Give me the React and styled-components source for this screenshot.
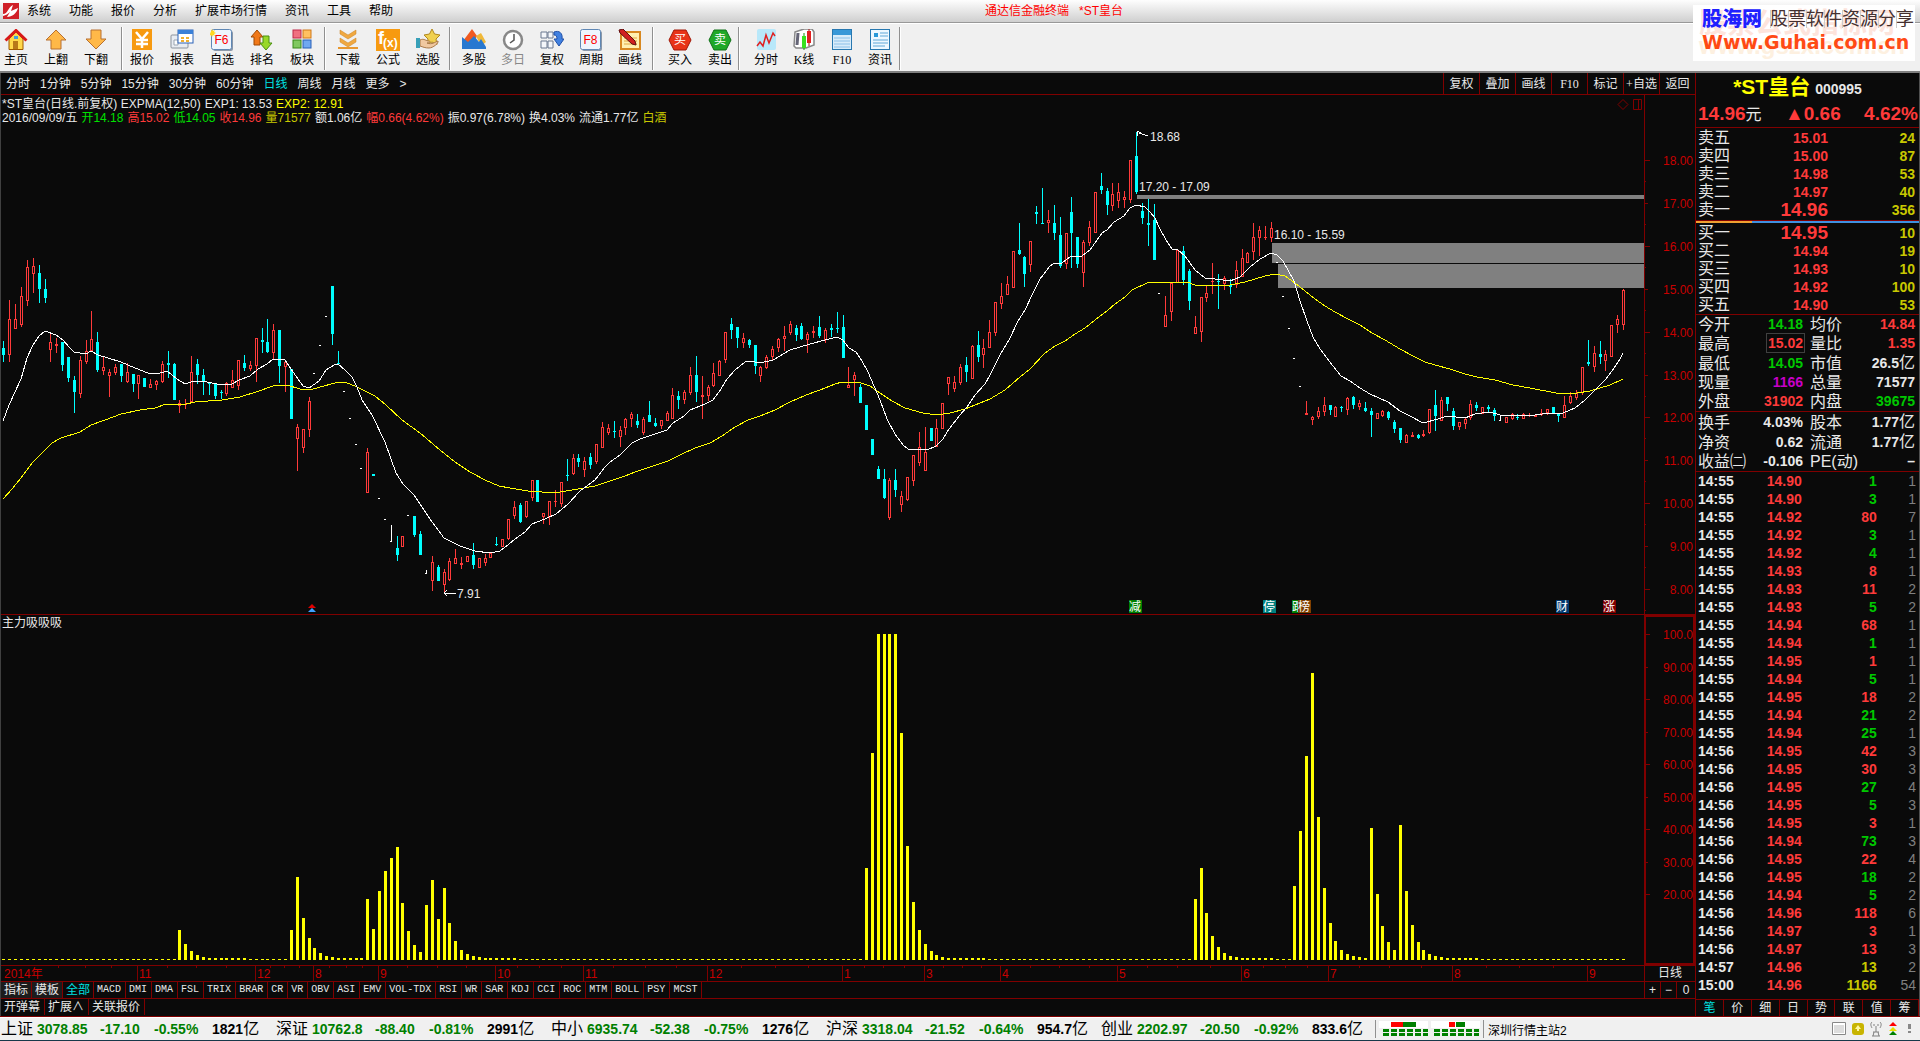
import React from 'react'
import styled, { createGlobalStyle } from 'styled-components'

const RED = '#ff3a3a'
const GREEN = '#00c800'
const CYAN = '#00ffff'
const LINE = '#800000'
const AXIS = '#c80000'
const BG = '#0a0a0a'
const SANS = '"Liberation Sans", "Noto Sans CJK SC", sans-serif'
const MONO = '"Liberation Mono", "Noto Sans CJK SC", monospace'
const SERIF = '"Liberation Serif", "Noto Sans CJK SC", serif'

const GlobalStyle = createGlobalStyle`
* { box-sizing: border-box; }
body {
  margin: 0;
  background: ${BG};
  font-family: ${SANS};
  font-size: 12px;
}
button {
  margin: 0;
  padding: 0;
  border: 0;
  background: none;
  color: inherit;
  font: inherit;
  white-space: nowrap;
}
svg { display: block; }
table { border-collapse: collapse; width: 100%; }
th, td { padding: 0; font-weight: inherit; }
`

/* ---------- data ---------- */

// one bar per entry: u/d = high, top, bottom, low   f = flat bar   w = open equals close
const BARS = `d 341 348 355 362,u 300 319 355 362,u 304 319 329 329,u 287 296 325 327,u 260 267 301 306,
u 258 266 274 293,d 265 273 289 303,d 279 289 298 303,u 334 342 350 362,u 338 344 346 353,
d 342 342 365 371,d 357 357 378 382,d 376 380 392 413,u 356 360 394 398,u 340 351 362 364,
u 311 339 351 351,d 332 342 370 372,u 357 367 371 375,u 369 372 376 397,u 364 367 373 375,
d 364 364 376 382,u 363 372 382 383,d 374 374 384 392,u 375 375 384 399,d 378 378 387 387,
u 379 384 388 388,u 380 381 385 390,u 361 364 382 383,d 351 363 365 378,d 363 364 400 400,
u 400 403 406 413,u 399 404 405 409,u 356 372 402 402,d 359 364 375 384,d 369 375 382 395,
d 382 383 384 395,d 384 384 396 399,d 390 392 393 399,u 382 383 394 396,u 370 380 388 388,
u 360 360 386 390,d 355 363 368 371,u 361 365 369 371,u 338 338 366 382,d 328 340 342 353,
d 319 342 352 353,u 324 330 353 359,d 330 330 366 383,u 360 362 367 392,d 369 369 419 419,
u 424 427 439 471,u 429 429 448 453,u 397 401 430 437,f 374,f 346,f 317,d 286 286 334 345,
d 351 363 364 364,f 392,f 419,f 445,f 469,u 448 452 493 493,d 474 474 476 476,f 499,f 520,
w 525 542,d 536 548 555 561,u 536 536 547 547,f 516,d 516 516 535 537,d 531 534 555 555,
w 570 574,u 556 562 581 591,d 565 567 581 581,u 569 572 585 592,u 558 561 580 581,
u 549 558 564 564,u 557 563 565 569,u 556 556 562 562,d 543 555 565 569,u 558 558 568 568,
u 554 558 563 566,u 552 553 558 558,d 537 544 545 546,u 539 539 547 547,u 519 519 539 540,
u 501 507 516 519,d 503 505 522 523,u 501 501 517 518,u 480 480 498 501,d 480 480 502 502,
u 513 513 517 524,u 501 501 517 525,u 490 501 502 507,u 482 482 504 507,d 459 475 476 481,
u 454 458 474 475,d 454 458 462 467,u 457 461 470 477,d 453 457 465 469,u 444 444 462 464,
u 422 427 448 448,u 424 428 433 435,d 421 431 432 438,u 426 430 437 447,u 418 419 428 435,
u 412 414 419 427,d 414 421 425 428,u 417 419 433 435,d 401 415 422 422,d 418 423 426 427,
u 420 420 426 429,u 411 413 421 421,u 388 395 419 419,d 391 396 400 409,u 390 392 400 404,
u 367 375 393 395,d 356 375 392 402,u 376 395 397 419,u 385 387 396 401,u 363 373 386 387,
u 360 361 376 376,u 332 332 360 363,d 318 324 330 339,d 327 327 338 348,u 333 338 343 348,
d 339 340 345 348,d 345 345 366 374,u 366 367 376 382,u 355 357 368 369,u 346 349 357 360,
u 338 339 348 352,u 326 336 339 351,u 321 324 333 335,d 325 328 335 341,d 323 326 339 340,
u 332 334 340 353,u 326 331 333 338,d 316 327 336 338,u 328 330 340 343,d 324 328 330 337,
d 312 328 329 333,d 315 327 358 358,u 367 385 388 388,u 372 375 380 396,d 384 387 403 403,
d 405 405 430 430,d 439 439 455 455,d 466 469 479 479,d 469 479 498 499,u 478 480 518 520,
d 469 480 490 497,u 491 496 505 512,u 477 477 500 501,u 455 455 481 486,u 432 447 463 466,
u 427 452 471 471,d 428 428 441 441,u 419 428 447 447,u 403 403 429 429,u 377 377 384 395,
u 376 382 389 392,u 364 367 383 385,d 357 365 372 382,u 345 346 379 379,d 331 345 357 362,
u 339 348 355 368,u 320 332 348 348,u 302 302 333 336,u 283 296 304 309,u 276 284 295 295,
u 251 251 288 288,d 223 250 254 255,d 256 257 274 287,u 241 241 265 272,d 206 212 214 224,
d 188 223 224 224,u 210 220 223 233,d 205 223 233 240,d 217 235 266 268,u 233 233 264 269,
d 197 212 233 268,d 237 237 264 268,u 240 242 273 287,u 221 227 243 246,u 192 192 233 233,
d 173 186 190 194,d 188 191 205 215,u 183 194 206 211,u 183 192 201 208,u 191 197 200 208,
u 160 160 200 203,d 132 156 192 194,d 203 211 218 224,d 199 223 225 246,d 204 220 260 260,
f 294,u 296 315 327 327,u 283 283 312 321,u 250 250 283 283,d 246 251 280 285,d 269 271 301 310,
u 316 327 334 334,u 297 297 332 342,u 286 293 298 302,u 263 281 282 294,d 274 281 282 309,
u 276 278 284 290,d 279 285 287 294,u 261 270 285 288,u 249 258 277 277,u 252 253 263 263,
u 223 237 252 260,u 226 230 238 256,u 226 237 238 240,u 222 228 238 242,f 263,f 297,f 329,
f 359,f 387,u 401 413 415 415,u 416 417 420 425,u 407 411 417 419,u 397 405 412 416,
d 405 405 410 415,u 406 407 417 417,d 406 407 408 412,u 397 398 410 415,d 396 397 405 409,
u 400 403 407 410,d 402 408 411 412,d 408 411 415 437,u 413 413 419 419,u 410 411 416 417,
d 411 412 418 420,d 420 422 429 433,d 428 428 440 443,u 434 435 443 443,u 432 435 437 437,
d 434 435 438 439,u 430 434 436 437,u 409 409 433 434,d 390 405 416 431,u 397 400 421 421,
d 397 397 404 411,d 408 411 426 430,u 422 422 427 430,u 417 419 424 429,u 400 404 418 420,
d 402 405 408 411,u 407 407 414 414,d 405 407 409 413,d 408 410 416 421,w 415 421,
u 417 417 423 423,u 413 414 419 420,d 414 417 418 420,u 413 414 419 419,u 413 415 416 417,
u 414 415 417 417,u 409 413 415 416,u 409 409 413 415,d 407 407 413 413,d 413 414 416 422,
u 396 405 418 418,u 392 396 403 404,u 390 393 398 400,u 367 367 393 395,d 340 362 364 366,
u 346 353 367 372,d 341 354 357 364,u 350 354 361 371,u 325 325 357 357,u 315 319 325 333,
u 289 290 325 330`.split(',').map(s => {
  const [kind, ...v] = s.trim().split(' ')
  return { kind, v: v.map(Number) }
})

const FAST = `3,421 9,405 21,379 27,358 33,345 39,336 45,331 56,335 63,340 69,347 74,352 86,354 91,351 98,355
121,362 135,368 148,373 157,374 167,371 177,379 185,384 194,381 207,382 222,385 232,384 239,380 250,376 258,369
267,364 273,359 285,360 291,369 303,386 309,388 319,381 326,370 334,365 338,364 345,370 352,377 357,387 362,400
372,415 385,442 396,473 403,484 414,495 430,519 444,538 460,546 475,551 490,553 500,551 508,545 515,539 525,532
532,524 545,519 556,514 568,504 580,491 595,480 605,467 610,462 620,455 632,443 640,439 655,434 667,430 673,423
684,416 690,410 705,404 713,400 721,389 727,379 735,370 745,362 750,361 760,363 773,360 790,350 810,344 825,340
837,337 843,340 849,348 856,352 862,361 868,372 874,386 880,400 887,419 895,434 903,445 908,449 915,450 920,449
927,450 936,446 943,439 949,429 960,415 967,407 975,395 985,384 990,375 1000,355 1010,338 1018,321 1025,310
1032,295 1040,279 1050,266 1055,263 1062,263 1070,257 1076,256 1082,256 1090,250 1097,240 1102,233 1107,230
1114,222 1124,216 1130,208 1136,205 1145,207 1150,212 1155,218 1160,229 1166,240 1172,249 1178,250 1185,256
1195,270 1205,278 1215,279 1230,281 1240,277 1250,267 1260,259 1271,253 1277,255 1283,261 1288,270 1294,281
1300,301 1307,321 1313,337 1320,349 1333,366 1341,376 1350,381 1360,388 1370,394 1388,402 1400,411 1410,416
1423,423 1438,419 1447,416 1456,417 1465,418 1475,414 1490,412 1500,415 1535,415 1550,413 1563,413 1575,408
1585,400 1595,390 1605,380 1612,371 1620,359 1623,353`

const SLOW = `3,499 12,489 21,478 33,462 42,453 52,443 61,438 80,432 91,425 105,420 121,414 140,410 155,408 166,404
186,404 195,402 222,400 240,397 259,391 273,386 287,385 300,389 310,390 320,387 335,383 345,382 357,387 375,396
386,405 402,420 420,433 440,450 455,462 470,472 485,480 499,486 510,488 528,491 542,492 560,492 578,489 595,486
613,480 625,476 635,472 650,467 668,461 680,455 695,448 710,443 722,436 735,427 748,420 760,416 775,410 790,402
806,395 820,390 835,384 842,382 858,382 870,386 880,393 892,401 905,408 923,413 937,415 950,413 965,409 980,403
990,399 1005,390 1020,377 1030,369 1045,353 1055,346 1065,341 1075,334 1085,328 1095,320 1107,311 1115,304
1125,297 1132,290 1147,283 1155,282 1170,283 1187,282 1195,285 1230,285 1245,282 1255,279 1265,276 1275,274
1285,276 1295,283 1305,291 1315,299 1325,306 1335,312 1348,319 1360,325 1372,333 1385,340 1400,349 1413,356
1425,362 1435,365 1450,369 1465,374 1477,377 1495,380 1513,385 1530,388 1556,393 1577,393 1590,391 1600,388
1610,385 1623,379`

// indicator bursts: first bar index, then bar heights
const BURSTS = [
  [30, 30, 16, 9, 5, 3, 2, 2, 2, 2, 2, 2, 2],
  [49, 30, 83, 42, 22, 12, 7, 4, 3, 2, 2, 2, 2, 2],
  [62, 61, 31, 69, 89, 102, 113, 57, 29, 15, 8, 55, 80, 41, 72, 37, 19, 10, 6, 4, 3, 2, 2, 2, 2, 2, 2],
  [147, 92, 207, 326, 326, 326, 326, 227, 114, 58, 30, 16, 9, 5, 3, 2, 2, 2, 2, 2, 2, 2],
  [203, 61, 92, 47, 24, 13, 7, 4, 3, 2, 2, 2, 2, 2, 2],
  [220, 74, 129, 204, 287, 143, 72, 37, 19, 10, 6, 4, 3, 2, 132, 66, 34, 18, 10, 135, 69, 35, 18, 10, 6, 4, 3, 2, 2, 2, 2, 2, 2],
]

const HEIGHTS = BARS.map(() => 1)
BURSTS.forEach(([start, ...hs]) => hs.forEach((h, k) => { HEIGHTS[start + k] = h }))

const MONTHS = [['11', 137], ['12', 255], ['8', 313], ['9', 378], ['10', 495], ['11', 583], ['12', 707], ['1', 842],
  ['3', 924], ['4', 1000], ['5', 1117], ['6', 1241], ['7', 1328], ['8', 1452], ['9', 1587]]
const WEEKS = [58, 85, 111, 167, 196, 226, 270, 284, 299, 329, 346, 362, 407, 437, 466, 517, 539, 561, 613, 645, 676,
  741, 775, 808, 864, 883, 904, 943, 962, 981, 1030, 1059, 1089, 1147, 1177, 1210, 1263, 1285, 1307, 1359, 1389,
  1421, 1486, 1519, 1553]

const PRICES = [['18.00', 160], ['17.00', 203], ['16.00', 246], ['15.00', 289], ['14.00', 332], ['13.00', 375],
  ['12.00', 417], ['11.00', 460], ['10.00', 503], ['9.00', 546], ['8.00', 589]]
const LEVELS = [['100.0', 634], ['90.00', 667], ['80.00', 699], ['70.00', 732], ['60.00', 764], ['50.00', 797],
  ['40.00', 829], ['30.00', 862], ['20.00', 894]]

const MENU = ['系统', '功能', '报价', '分析', '扩展市场行情', '资讯', '工具', '帮助']
const PERIODS = ['分时', '1分钟', '5分钟', '15分钟', '30分钟', '60分钟', '日线', '周线', '月线', '更多', '>']
const ACTIONS = ['复权', '叠加', '画线', 'F10', '标记', '+自选', '返回']
const INDICATORS = ['指标', '模板', '全部', 'MACD', 'DMI', 'DMA', 'FSL', 'TRIX', 'BRAR', 'CR', 'VR', 'OBV', 'ASI', 'EMV',
  'VOL-TDX', 'RSI', 'WR', 'SAR', 'KDJ', 'CCI', 'ROC', 'MTM', 'BOLL', 'PSY', 'MCST']
const SIDE_TABS = ['笔', '价', '细', '日', '势', '联', '值', '筹']

const SELLS = [['卖五', '15.01', 24], ['卖四', '15.00', 87], ['卖三', '14.98', 53], ['卖二', '14.97', 40], ['卖一', '14.96', 356]]
const BUYS = [['买一', '14.95', 10], ['买二', '14.94', 19], ['买三', '14.93', 10], ['买四', '14.92', 100], ['买五', '14.90', 53]]

const W = '#e8e8e8'
const STATS = [
  ['今开', '14.18', GREEN, '均价', '14.84', RED],
  ['最高', '15.02', RED, '量比', '1.35', RED],
  ['最低', '14.05', GREEN, '市值', '26.5亿', W],
  ['现量', '1166', '#c800c8', '总量', '71577', W],
  ['外盘', '31902', RED, '内盘', '39675', GREEN],
]
const STATS2 = [
  ['换手', '4.03%', W, '股本', '1.77亿', W],
  ['净资', '0.62', W, '流通', '1.77亿', W],
  ['收益㈡', '-0.106', W, 'PE(动)', '–', W],
]

const TICKS = `14:55 14.90 1 g 1,14:55 14.90 3 g 1,14:55 14.92 80 r 7,14:55 14.92 3 g 1,14:55 14.92 4 g 1,
14:55 14.93 8 r 1,14:55 14.93 11 r 2,14:55 14.93 5 g 2,14:55 14.94 68 r 1,14:55 14.94 1 g 1,14:55 14.95 1 r 1,
14:55 14.94 5 g 1,14:55 14.95 18 r 2,14:55 14.94 21 g 2,14:55 14.94 25 g 1,14:56 14.95 42 r 3,14:56 14.95 30 r 3,
14:56 14.95 27 g 4,14:56 14.95 5 g 3,14:56 14.95 3 r 1,14:56 14.94 73 g 3,14:56 14.95 22 r 4,14:56 14.95 18 g 2,
14:56 14.94 5 g 2,14:56 14.96 118 r 6,14:56 14.97 3 r 1,14:56 14.97 13 r 3,14:57 14.96 13 y 2,
15:00 14.96 1166 y 54`.split(',').map(s => s.trim().split(' '))
const TICK_COLORS = { g: GREEN, r: RED, y: '#c8c800' }

const INDEXES = [
  ['上证', '3078.85', '-17.10', '-0.55%', '1821'],
  ['深证', '10762.8', '-88.40', '-0.81%', '2991'],
  ['中小', '6935.74', '-52.38', '-0.75%', '1276'],
  ['沪深', '3318.04', '-21.52', '-0.64%', '954.7'],
  ['创业', '2202.97', '-20.50', '-0.92%', '833.6'],
]

/* ---------- frame ---------- */

const Page = styled.div`
  display: flex;
  flex-direction: column;
  min-height: 100vh;
  position: relative;
  overflow: hidden;
`

const MenuBar = styled.nav`
  display: flex;
  align-items: center;
  gap: 18px;
  height: 23px;
  padding-left: 3px;
  border-bottom: 1px solid #989898;
  background: linear-gradient(#fefefe, #cfcfcf);
  color: #000;
  line-height: 16px;

  svg { margin-right: -10px; }
`

const WindowTitle = styled.div`
  flex: 1;
  text-align: center;
  color: #f00;
  white-space: pre;
`

const Caption = styled.div`
  width: 205px;
`

const ToolBar = styled.div`
  display: flex;
  height: 50px;
  padding-top: 3px;
  background: #f0f0f0;
  border-top: 1px solid #fff;
  border-bottom: 2px solid #808080;
`

const ToolGroup = styled.div`
  display: flex;
  gap: ${p => p.$gap || 8}px;
  padding: 2px ${p => p.$right}px 0 ${p => p.$left}px;
  border-right: 1px solid #909090;
  box-shadow: 1px 0 #fff;
  height: 43px;
`

const ToolButton = styled.button`
  display: flex;
  flex-direction: column;
  align-items: center;
  gap: 1px;
  width: 32px;
  color: ${p => (p.disabled ? '#888' : '#000')};
  font: 12px/16px ${SERIF};
`

const Watermark = styled.aside`
  position: absolute;
  top: 5px;
  right: 5px;
  width: 222px;
  height: 56px;
  padding: 3px 0 0 9px;
  background: #fff;
  white-space: nowrap;
`

const MarkRow = styled.div`
  position: relative;
  display: flex;
  align-items: center;
  gap: 8px;
  height: 22px;
`

const MarkName = styled.span`
  color: #2020ff;
  font-size: 20px;
  font-weight: 900;
  line-height: 22px;
`

const MarkSlogan = styled.span`
  color: #443030;
  font-size: 18px;
  line-height: 18px;
  background: repeating-linear-gradient(90deg, #ccc 0 1px, transparent 1px 18px);
`

const MarkSite = styled.a`
  position: relative;
  display: block;
  color: #ff4a14;
  font: bold 19px/24px "DejaVu Sans", sans-serif;
  text-decoration: none;
`

const Ghost = styled.span`
  position: absolute;
  left: 6px;
  top: ${p => p.$top}px;
  color: ${p => p.$color};
  font-size: ${p => p.$size}px;
  font-weight: bold;
  line-height: 30px;
`

const Main = styled.main`
  display: grid;
  grid-template-columns: minmax(0, 1fr) 225px;
  flex: 1;
  background: ${BG};
  color: ${W};
  border-bottom: 1px solid ${LINE};
`

const ChartPane = styled.section`
  display: flex;
  flex-direction: column;
  border-left: 1px solid #404040;
`

const PeriodBar = styled.div`
  display: flex;
  justify-content: space-between;
  height: 22px;
  border-bottom: 1px solid ${LINE};
  line-height: 20px;
`

const Periods = styled.div`
  display: flex;
  gap: 10px;
  padding-left: 5px;
`

const TextButton = styled.button`
  color: ${p => (p.$active ? '#00e0e0' : W)};
`

const Actions = styled.div`
  display: flex;
`

const ActionButton = styled.button`
  width: 36px;
  border-left: 1px solid ${LINE};
  font: 12px/20px ${SERIF};
`

const ChartRow = styled.div`
  display: grid;
  grid-template-columns: minmax(0, 1fr) 51px;
  border-bottom: ${p => (p.$last ? 0 : 1)}px solid ${LINE};
`

const Info = styled.div`
  display: flex;
  justify-content: space-between;
  height: ${p => p.$height}px;
  padding: ${p => p.$pad}px 1px 0 1px;
  line-height: 14px;
`

const InfoLine = styled.div`
  display: flex;
  gap: 4px;
  white-space: nowrap;
`

const Tone = styled.span`
  color: ${p => p.$color};
`

const Plot = styled.svg.attrs({ preserveAspectRatio: 'xMinYMin meet' })`
  width: 100%;
  height: ${p => p.$height}px;
  font-family: ${SANS};
  font-size: 12px;
`

const AxisFrame = styled.div`
  border: 2px solid ${LINE};
`

const TimeRow = styled(ChartRow)`
  border-top: 1px solid ${LINE};
`

const PeriodCell = styled.div`
  border-left: 1px solid ${LINE};
  text-align: center;
  line-height: 15px;
`

const CellBar = styled.div`
  display: flex;
  height: 17px;
  border-bottom: ${p => (p.$last ? 0 : 1)}px solid ${LINE};
`

const Cell = styled.button`
  height: 16px;
  padding: 0 ${p => (p.$tight ? 3 : 4)}px 0 3px;
  border-right: 1px solid ${LINE};
  background: ${p => (p.$raised ? '#1c1c1c' : 'none')};
  color: ${p => (p.$active ? '#00e0e0' : W)};
  font: ${p => (p.$mono ? `10px/16px ${MONO}` : `12px/16px ${SANS}`)};
`

const ZoomCells = styled.div`
  display: grid;
  grid-template-columns: 16px 16px 19px;
  margin-left: auto;
`

const ZoomButton = styled.button`
  border-left: 1px solid ${LINE};
  line-height: 16px;
`

/* ---------- quote panel ---------- */

const Quote = styled.section`
  display: flex;
  flex-direction: column;
  border-left: 1px solid ${LINE};
  border-right: 1px solid #505050;
  font-size: 14px;
`

const QuoteTitle = styled.h1`
  display: flex;
  align-items: baseline;
  justify-content: center;
  gap: 5px;
  margin: 0;
  height: 28px;
  padding-right: 20px;
  color: #ffff00;
  font-size: 21px;
  line-height: 28px;

  small { color: ${W}; font-size: 14px; }
`

const LastPrice = styled.div`
  display: flex;
  justify-content: space-between;
  height: 27px;
  padding: 0 1px 0 2px;
  border-bottom: 1px solid ${LINE};
  color: ${RED};
  font-size: 19px;
  font-weight: bold;
  line-height: 26px;

  small { color: ${W}; font-size: 16px; font-weight: normal; }
`

const Block = styled.div`
  padding: ${p => p.$pad}px 4px 0 2px;
  height: ${p => p.$height}px;
  border-bottom: 1px solid ${LINE};
  overflow: hidden;
`

const OrderRow = styled.tr`
  height: 18px;
  line-height: 18px;
  font-weight: bold;

  th {
    width: 60px;
    text-align: left;
    font-size: 16px;
    font-weight: normal;
  }
  td:nth-child(2) {
    width: 70px;
    color: ${RED};
    text-align: right;
    font-size: ${p => (p.$best ? 19 : 14)}px;
  }
  td:nth-child(3) {
    color: #c8c800;
    text-align: right;
  }
`

const Balance = styled.div`
  height: 2px;
  background: linear-gradient(90deg, #f0a030 25%, #4090e0 25%);
`

const StatRow = styled.tr`
  height: 19px;
  line-height: 19px;

  th {
    text-align: left;
    font-size: 16px;
    font-weight: normal;
    white-space: nowrap;
  }
  th:nth-child(1) { width: 52px; }
  th:nth-child(3) { width: 56px; padding-left: 7px; }
  td { text-align: right; font-weight: bold; white-space: nowrap; }
  td:nth-child(2) { width: 53px; }
  td small { font-size: 16px; font-weight: normal; }
`

const HighBox = styled.span`
  outline: 1px solid #404040;
  outline-offset: 1px;
`

const TickTable = styled.table`
  margin-bottom: 5px;
`

const TickRow = styled.tr`
  height: 18px;
  line-height: 18px;
  font-weight: bold;
  text-align: right;

  td:nth-child(1) { width: 36px; padding-left: 2px; text-align: left; }
  td:nth-child(2) { width: 68px; color: ${RED}; }
  td:nth-child(3) { width: 75px; color: ${p => p.$color}; }
  td:nth-child(4) { color: #808080; font-weight: normal; padding-right: 3px; }
`

const SideTabs = styled.div`
  display: grid;
  grid-template-columns: repeat(8, 1fr);
  flex: 1;
  border-top: 1px solid ${LINE};
`

const SideTab = styled.button`
  border-right: 1px solid ${LINE};
  color: ${p => (p.$active ? '#00e0e0' : W)};
  font-size: 12px;
  line-height: 16px;
`

/* ---------- status bar ---------- */

const StatusBar = styled.footer`
  display: flex;
  align-items: center;
  height: 24px;
  border-top: 1px solid #fff;
  border-bottom: 1px solid #17384a;
  background: #f0f0f0;
  color: #000;
  font-size: 14px;
  font-weight: bold;
  white-space: nowrap;
`

const IndexCell = styled.div`
  display: grid;
  grid-template-columns: 36px 63px 54px 58px 64px;
  align-items: center;
  padding-left: 1px;
  margin-right: -1px;
  line-height: 22px;
  color: #008000;

  span { color: #000; font-size: 16px; font-weight: normal; }
  b { color: #000; font-size: 14px; }
`

const Meters = styled.div`
  padding: 0 3px;
  border-left: 1px solid #909090;
  border-right: 1px solid #909090;
`

const Station = styled.span`
  flex: 1;
  padding-left: 4px;
  font-size: 12px;
  font-weight: normal;
`

const Tray = styled.div`
  display: flex;
  align-items: center;
  gap: 6px;
  padding-right: 6px;
`

/* ---------- icons ---------- */

const Hex = ({ a, b, label }) => (
  <>
    <path d="M6 1h12l5 10-5 10H6L1 11z" fill={a} stroke={b} />
    <text x="12" y="15" fill="#fff" fontSize="12" textAnchor="middle">{label}</text>
  </>
)

const KeyCap = ({ label }) => (
  <>
    <rect x="3" y="2" width="20" height="20" rx="2" fill="#8a97a8" />
    <rect x="1.5" y="0.5" width="20" height="20" rx="2" fill="#eef5fd" stroke="#5f87b4" />
    <text x="11.5" y="15" fill="#f00" fontFamily="Liberation Sans" fontSize="12" textAnchor="middle">{label}</text>
  </>
)

const ICONS = {
  主页: (
    <>
      <path d="M5 10v10.500h14V10l-7-7z" fill="#ffd84a" stroke="#a05a00" />
      <path d="M1.500 11.500L12 1.500l10.500 10" fill="none" stroke="#d81818" strokeWidth="3" />
      <rect x="9" y="12" width="5" height="8" fill="#b87818" /><rect x="10" y="7" width="4" height="3" fill="#40a0e0" />
    </>
  ),
  上翻: <path d="M12 1L2 11h5v9h10v-9h5z" fill="#ffb848" stroke="#b87030" strokeLinejoin="round" />,
  下翻: <path d="M12 20L2 10h5V1h10v9h5z" fill="#ffb848" stroke="#b87030" strokeLinejoin="round" />,
  报价: (
    <>
      <rect x="2" width="20" height="21" fill="#f79a10" />
      <path d="M6 3l6 7 6-7M12 10v9M6 11h12M6 15h12" fill="none" stroke="#fff" strokeWidth="2.500" />
    </>
  ),
  报表: (
    <>
      <rect x="1" y="6" width="17" height="13" rx="1" fill="#e8ecf2" stroke="#8a929c" />
      <path d="M4 11h4v5H4z" fill="#fff" stroke="#9aa4b0" />
      <rect x="8" y="1" width="15" height="13" fill="#fff" stroke="#2a62b8" /><path d="M8 1h15v4H8z" fill="#3a80d8" />
      <path d="M11 8h3v2h-3zM16 8h3v2h-3zM11 11h3v2h-3zM16 11h3v2h-3z" fill="#f0b030" />
    </>
  ),
  自选: <><KeyCap label="F6" /><path d="M2 0l1 2 2-1-1 2 2 1-2 1 1 2-2-1-1 2-1-2-2 1z" fill="#ffd820" /></>,
  排名: (
    <>
      <path d="M7 1L1 8h3v8h6V8h3z" fill="#f07818" stroke="#a04800" />
      <path d="M16 21l6-7h-3V7h-6v7h-3z" fill="#98d828" stroke="#4a9010" />
    </>
  ),
  板块: (
    <>
      <rect x="3" y="1" width="8" height="8" fill="#f07080" stroke="#c02848" />
      <rect x="13" y="1" width="8" height="8" fill="#ffc060" stroke="#d07818" />
      <rect x="3" y="11" width="8" height="8" fill="#80c860" stroke="#388818" />
      <rect x="13" y="11" width="8" height="8" fill="#70a8f0" stroke="#2860b8" />
    </>
  ),
  下载: (
    <>
      <path d="M4 1l8 5 8-5v4l-8 5-8-5zM4 9l8 5 8-5v4l-8 5-8-5z" fill="#f0a840" stroke="#c88020" strokeWidth="0.500" />
      <path d="M2 19h20" stroke="#e89830" strokeWidth="2" />
    </>
  ),
  公式: (
    <>
      <rect width="24" height="22" fill="#f79a10" />
      <text x="2" y="15" fill="#fff" fontFamily="Liberation Sans" fontSize="18" fontWeight="bold">f</text>
      <text x="7" y="18" fill="#fff" fontFamily="Liberation Sans" fontSize="12" fontWeight="bold">(x)</text>
    </>
  ),
  选股: (
    <>
      <path d="M16 0l2.500 5 5.500 1-4 4 1 5.500-5-2.500-5 2.500 1-5.500-4-4 5.500-1z" fill="#f0d050" stroke="#b08820" />
      <path d="M4 11c4-2 6 1 9 1 2 0 1 2-2 2 5 2 8-1 11-2 1 2-5 7-9 7-4 0-6-1-9-2z" fill="#f0c8a0" stroke="#a87848" />
      <rect y="9" width="4" height="10" fill="#38a0b8" />
    </>
  ),
  多股: (
    <>
      <path d="M1 12L10 0l5 7-6 12z" fill="#f05a20" /><path d="M14 7l5-3 5 9-5 4z" fill="#f0b838" />
      <path d="M0 20V8l6 5 6-6 5 6 2-3 5 8v2z" fill="#2878d0" />
    </>
  ),
  多日: (
    <>
      <circle cx="12" cy="11" r="9" fill="#fff" stroke="#888" strokeWidth="2.500" />
      <path d="M13 5v6l-4 3" fill="none" stroke="#555" strokeWidth="1.500" />
    </>
  ),
  复权: (
    <>
      <path d="M1 3h6v6H1zM1 12h6v7H1zM8 3h5v6H8zM8 12h5v7H8z" fill="#f4f6fa" stroke="#6a7890" />
      <path d="M14 3c5-2 9 1 8 7h2l-5 7-5-7h3c0-3-1-4-3-4z" fill="#4080e0" stroke="#2050a8" />
    </>
  ),
  周期: <KeyCap label="F8" />,
  画线: (
    <>
      <rect x="3" y="3" width="19" height="17" fill="#fff0b0" stroke="#d88820" strokeWidth="2" />
      <path d="M6 9h13M6 12h13M6 15h13" stroke="#e0a840" />
      <path d="M1 1l4-1 12 12 1 4-4-1L2 4z" fill="#d02020" stroke="#601010" />
    </>
  ),
  买入: <Hex a="#e83418" b="#a01808" label="买" />,
  卖出: <Hex a="#20a828" b="#107018" label="卖" />,
  分时: (
    <>
      <rect x="3" y="0" width="19" height="21" rx="2" fill="#b8e8fa" />
      <path d="M3 17l3-4 3 4 3-11 3 8 4-10 2 3" fill="none" stroke="#e02020" strokeWidth="1.500" />
    </>
  ),
  K线: (
    <>
      <path d="M3 3l9-3h8l2 3v13l-8 3H4l-2-2z" fill="#fff" stroke="#888" strokeWidth="1.500" />
      <path d="M6 4l-1 12" stroke="#667" strokeWidth="3" />
      <path d="M12 4v17" stroke="#189010" /><rect x="10" y="7" width="4" height="12" fill="#38e020" />
      <path d="M17 0v17" stroke="#a01010" /><rect x="15" y="2" width="4" height="12" fill="#e02020" />
    </>
  ),
  F10: (
    <>
      <rect x="2.500" y="0.500" width="19" height="20" fill="#d8ecfa" stroke="#2878b0" /><path d="M3 1h18v5H3z" fill="#3898d8" />
      <path d="M4 9h16M4 12h16M4 15h16M4 18h16" stroke="#8cc0e8" />
    </>
  ),
  资讯: (
    <>
      <rect x="2.500" y="0.500" width="19" height="20" fill="#eef8ff" stroke="#2878b0" />
      <path d="M12 4h8M12 7h8M5 11h15M5 14h15M5 17h12" stroke="#60a8d8" /><path d="M6 4h4v4H6z" fill="#2898d8" />
    </>
  ),
}

const GROUPS = [
  { names: ['主页', '上翻', '下翻'], left: 0, right: 9 },
  { names: ['报价', '报表', '自选', '排名', '板块'], left: 4, right: 6 },
  { names: ['下载', '公式', '选股'], left: 7, right: 5 },
  { names: ['多股', '多日', '复权', '周期', '画线'], left: 8, right: 6, gap: 7 },
  { names: ['买入', '卖出'], left: 11, right: 2 },
  { names: ['分时', 'K线', 'F10', '资讯'], left: 11, right: 3, gap: 6 },
]

/* ---------- charts ---------- */

const barX = i => Math.floor(3.93 + 5.868 * i)

const Bar = ({ index, kind, v }) => {
  const x = barX(index)
  if (kind === 'f') return <rect x={x - 1} y={v[0] - 1} width="2" height="1" fill="#fff" />
  if (kind === 'w') {
    return (
      <g fill="#fff">
        <rect x={x} y={v[0]} width="1" height={v[1] - v[0]} />
        <rect x={x - 1} y={v[1] - 1} width="1" height="1" />
      </g>
    )
  }
  const [high, top, bottom, low] = v
  const h = bottom - top
  if (kind === 'd' || h < 3) {
    return (
      <g fill={kind === 'd' ? CYAN : RED}>
        <rect x={x} y={high} width="1" height={low - high} />
        <rect x={x - 1} y={top} width="3" height={h} />
      </g>
    )
  }
  return (
    <g fill={RED}>
      <rect x={x} y={high} width="1" height={top - high} />
      <rect x={x} y={bottom} width="1" height={low - bottom} />
      <path d={`M${x - 1} ${top}h3v${h}h-3zM${x} ${top + 1}v${h - 2}h1v${2 - h}z`} />
    </g>
  )
}

const Badge = ({ x, color, label }) => (
  <g>
    <rect x={x} y="600" width="13" height="13" fill={color} />
    <text x={x + 6} y="611" fill="#fff" textAnchor="middle">{label}</text>
  </g>
)

const PriceChart = () => (
  <Plot viewBox="1 125 1643 489" $height={489}>
    <g shapeRendering="crispEdges">
      <path d="M1137 195h507v4h-507zM1272 243h372v20h-372zM1278 264h366v24h-366z" fill="#808080" />
      {BARS.map((b, i) => <Bar key={i} index={i} {...b} />)}
      <polyline points={SLOW} fill="none" stroke="#ffff00" />
      <polyline points={FAST} fill="none" stroke="#ffffff" />
      <path d="M1137 131l4 2M1137 131v5M1139 133l9 3M444 593h12M444 593l3-3M444 593l3 3" fill="none" stroke="#fff" />
    </g>
    <g fill={W}>
      <text x="1150" y="141">18.68</text>
      <text x="1139" y="191">17.20 - 17.09</text>
      <text x="1274" y="239">16.10 - 15.59</text>
      <text x="457" y="598">7.91</text>
    </g>
    <path d="M312 604l4 4h-8z" fill="#e00000" />
    <path d="M312 608l4 4h-8z" fill="#40a0ff" />
    <Badge x={1129} color="#008000" label="减" />
    <Badge x={1263} color="#008080" label="停" />
    <Badge x={1292} color="#008000" label="跟" />
    <Badge x={1298} color="#804000" label="榜" />
    <Badge x={1556} color="#003870" label="财" />
    <Badge x={1603} color="#800000" label="涨" />
  </Plot>
)

const Scale = ({ marks, top, height, left, step }) => (
  <Plot viewBox={`${left} ${top} ${51 - left * 2} ${height}`} $height={height}>
    {marks.map(([label, y], i) => (
      <g key={label} fill={LINE}>
        <rect x="1" y={y} width={i % 2 ? 3 : 5} height="1" />
        {step && <rect x="1" y={y + 21} width="1" height="1" />}
        <text x="49" y={y + 5} textAnchor="end" fill={AXIS}>{label}</text>
      </g>
    ))}
    {step && <rect x="0" y={top} width="1" height={height} fill={LINE} />}
  </Plot>
)

const TimeAxis = () => (
  <Plot viewBox="1 966 1643 15" $height={15}>
    <g fill={AXIS}>
      <text x="4" y="978">2014年</text>
      {MONTHS.map(([label, x]) => <text key={x} x={x + 2} y="978">{label}</text>)}
    </g>
    <g fill={LINE}>
      {MONTHS.map(([, x]) => <rect key={x} x={x} y="966" width="1" height="15" />)}
      {WEEKS.map(x => <rect key={x} x={x} y="966" width="1" height="2" />)}
    </g>
  </Plot>
)

/* ---------- parts ---------- */

const withUnit = s => (s.endsWith('亿') ? <>{s.slice(0, -1)}<small>亿</small></> : s)

const Orders = ({ rows, best }) => (
  <table>
    <tbody>
      {rows.map(([name, price, volume]) => (
        <OrderRow key={name} $best={name === best}>
          <th scope="row">{name}</th>
          <td>{price}</td>
          <td>{volume}</td>
        </OrderRow>
      ))}
    </tbody>
  </table>
)

const Stats = ({ rows }) => (
  <table>
    <tbody>
      {rows.map(([a, va, ca, b, vb, cb]) => (
        <StatRow key={a}>
          <th scope="row">{a}</th>
          <td><Tone $color={ca}>{a === '最高' ? <HighBox>{va}</HighBox> : va}</Tone></td>
          <th scope="row">{b}</th>
          <td><Tone $color={cb}>{withUnit(vb)}</Tone></td>
        </StatRow>
      ))}
    </tbody>
  </table>
)

const QuotePanel = () => (
  <Quote>
    <QuoteTitle>*ST皇台 <small>000995</small></QuoteTitle>
    <LastPrice>
      <span>14.96<small>元</small></span>
      <span>▲0.66</span>
      <span>4.62%</span>
    </LastPrice>
    <Block $pad={1} $height={93}>
      <Orders rows={SELLS} best="卖一" />
    </Block>
    <Balance />
    <Block $pad={1} $height={92}>
      <Orders rows={BUYS} best="买一" />
    </Block>
    <Block $pad={0} $height={97}>
      <Stats rows={STATS} />
    </Block>
    <Block $pad={0} $height={60}>
      <Stats rows={STATS2} />
    </Block>
    <TickTable>
      <tbody>
        {TICKS.map(([time, price, volume, tone, count], i) => (
          <TickRow key={i} $color={TICK_COLORS[tone]}>
            <td>{time}</td>
            <td>{price}</td>
            <td>{volume}</td>
            <td>{count}</td>
          </TickRow>
        ))}
      </tbody>
    </TickTable>
    <SideTabs>
      {SIDE_TABS.map((t, i) => <SideTab key={t} $active={i === 0}>{t}</SideTab>)}
    </SideTabs>
  </Quote>
)

const Charts = () => (
  <ChartPane>
    <PeriodBar>
      <Periods>
        {PERIODS.map(p => <TextButton key={p} $active={p === '日线'}>{p}</TextButton>)}
      </Periods>
      <Actions>
        {ACTIONS.map(a => <ActionButton key={a}>{a}</ActionButton>)}
      </Actions>
    </PeriodBar>
    <ChartRow>
      <div>
        <Info $height={30} $pad={2}>
          <div>
            <InfoLine>
              <span>*ST皇台(日线.前复权) EXPMA(12,50)</span>
              <span>EXP1: 13.53</span>
              <Tone $color="#ffff00">EXP2: 12.91</Tone>
            </InfoLine>
            <InfoLine>
              <span>2016/09/09/五</span>
              <Tone $color="#00e000">开14.18</Tone>
              <Tone $color={RED}>高15.02</Tone>
              <Tone $color="#00e000">低14.05</Tone>
              <Tone $color={RED}>收14.96</Tone>
              <Tone $color="#c8c800">量71577</Tone>
              <span>额1.06亿</span>
              <Tone $color={RED}>幅0.66(4.62%)</Tone>
              <span>振0.97(6.78%)</span>
              <span>换4.03%</span>
              <span>流通1.77亿</span>
              <Tone $color="#c8c800">白酒</Tone>
            </InfoLine>
          </div>
          <svg width="26" height="14" fill="none" stroke={LINE}>
            <path d="M1 7.500L6 2.500l5 5-5 5zM16.500 2.500h8v10h-8zM21.500 2.500v10" />
          </svg>
        </Info>
        <PriceChart />
      </div>
      <Scale marks={PRICES} top={95} height={519} left={0} step />
    </ChartRow>
    <ChartRow $last>
      <div>
        <Info $height={18} $pad={1}>主力吸吸吸</Info>
        <Plot viewBox="1 633 1643 332" $height={332}>
          {HEIGHTS.map((h, i) => (
            <rect key={i} x={barX(i) - 1} y={960 - h} width="3" height={h} fill="#ffff00" />
          ))}
        </Plot>
      </div>
      <AxisFrame>
        <Scale marks={LEVELS} top={617} height={346} left={2} />
      </AxisFrame>
    </ChartRow>
    <TimeRow>
      <TimeAxis />
      <PeriodCell>日线</PeriodCell>
    </TimeRow>
    <CellBar>
      {INDICATORS.map((t, i) => (
        <Cell key={t} $mono={i > 2} $tight={i < 3} $raised={i < 2} $active={i === 2}>{t}</Cell>
      ))}
      <ZoomCells>
        <ZoomButton>+</ZoomButton>
        <ZoomButton>−</ZoomButton>
        <ZoomButton>0</ZoomButton>
      </ZoomCells>
    </CellBar>
    <CellBar $last>
      <Cell>开弹幕</Cell>
      <Cell>扩展∧</Cell>
      <Cell>关联报价</Cell>
    </CellBar>
  </ChartPane>
)

const App = () => (
  <Page>
    <GlobalStyle />
    <MenuBar>
      <svg width="16" height="16">
        <rect width="16" height="16" fill="#d02028" />
        <path d="M0 11c5 0 5-7 10-9L8 8l7-3c-1 5-6 9-11 9l3-5c-2 2-4 3-7 4z" fill="#fff" />
      </svg>
      {MENU.map(m => <button key={m}>{m}</button>)}
      <WindowTitle>通达信金融终端   *ST皇台</WindowTitle>
      <Caption />
    </MenuBar>
    <ToolBar>
      {GROUPS.map(g => (
        <ToolGroup key={g.names[0]} $left={g.left} $right={g.right} $gap={g.gap}>
          {g.names.map(n => (
            <ToolButton key={n} disabled={n === '多日'}>
              <svg width="24" height="22">{ICONS[n]}</svg>
              {n}
            </ToolButton>
          ))}
        </ToolGroup>
      ))}
    </ToolBar>
    <Main>
      <Charts />
      <QuotePanel />
    </Main>
    <StatusBar>
      {INDEXES.map(([name, last, diff, pct, amount]) => (
        <IndexCell key={name}>
          <span>{name}</span>
          <div>{last}</div>
          <div>{diff}</div>
          <div>{pct}</div>
          <span><b>{amount}</b>亿</span>
        </IndexCell>
      ))}
      <Meters>
        <svg width="101" height="18">
          <path d="M0 1h49v7H0zM52 1h49v7H52z" fill="#fff" />
          <path d="M12 2h12v5H12zM70 2h6v5h-6z" fill="#f00" />
          <path d="M24 2h13v5H24zM77 2h9v5h-9z" fill="#008000" />
          <path d="M4 10.500h45M4 14.500h45M55 10.500h45M55 14.500h45" stroke="#008000" strokeWidth="3" strokeDasharray="6 2" />
        </svg>
      </Meters>
      <Station>深圳行情主站2</Station>
      <Tray>
        <svg width="14" height="14"><path d="M0.500 0.500h13v12h-13z" fill="#fff" stroke="#888" /><path d="M2 4h10M2 6h10M2 8h10M2 10h10" stroke="#bbb" /></svg>
        <svg width="12" height="12"><rect width="12" height="12" rx="3" fill="#c8b400" /><path d="M6 2l3 4H7v2H5V6H3z" fill="#fff8a0" /></svg>
        <svg width="12" height="16" fill="none" stroke="#808080"><path d="M6 5v6M3 11h6M2 15h8M4 11l-1 4M8 11l1 4M2 1c-2 2-1 4 0 6M10 1c2 2 1 4 0 6M4 3v2M8 3v2" /></svg>
        <svg width="10" height="14"><path d="M5 0l4 4H1z" fill="#f00" /><path d="M5 5l4 4H1z" fill="#e8e000" /><path d="M5 9l4 4H1z" fill="#008000" /></svg>
        <svg width="10" height="14"><path d="M4 2h3v5H4zM4 9h3v2H4z" fill="#888" /></svg>
      </Tray>
    </StatusBar>
    <Watermark>
      <Ghost $top={4} $size={28} $color="#fde4dc">股票公式指标网</Ghost>
      <Ghost $top={26} $size={24} $color="#fdf0e0">www.gszx.com.cn</Ghost>
      <MarkRow>
        <MarkName>股海网</MarkName>
        <MarkSlogan>股票软件资源分享</MarkSlogan>
      </MarkRow>
      <MarkSite href="#">Www.Guhai.com.cn</MarkSite>
    </Watermark>
  </Page>
)

export default App
